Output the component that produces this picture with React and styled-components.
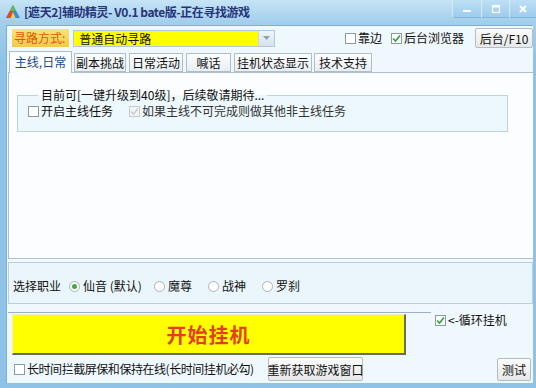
import React from "react";
import styled, { createGlobalStyle } from "styled-components";

const Global = createGlobalStyle`
  html, body { margin: 0; padding: 0; background: #ffffff; }
  body { font-family: "Noto Sans CJK SC", "Noto Sans", sans-serif; font-size: 12px; color: #111; }
  * { box-sizing: border-box; }
`;

const Window = styled.div`
  width: 536px;
  height: 388px;
  display: flex;
  flex-direction: column;
  padding: 0 3px 5px 6px;
  background: linear-gradient(#c6e4f7 0px, #a3cfec 22px, #8ec3e7 60px, #8ec3e7 100%);
  overflow: hidden;
`;

const TitleBar = styled.div`
  height: 25px;
  flex: none;
  display: flex;
  align-items: flex-start;
  margin-left: -3px;
`;

const TitleIcon = styled.svg`
  width: 16px;
  height: 16px;
  margin: 4px 3px 0 2px;
  flex: none;
`;

const TitleText = styled.div`
  margin-top: 4px;
  font-weight: bold;
  font-size: 12px;
  line-height: 16px;
  letter-spacing: -0.45px;
  color: #27357a;
  white-space: nowrap;
`;

const Controls = styled.div`
  margin-left: auto;
  display: flex;
  height: 18px;
  margin-right: -3px;
`;

const CtrlBtn = styled.div`
  width: ${p => p.$w}px;
  height: 18px;
  display: flex;
  align-items: center;
  justify-content: center;
  background: linear-gradient(#bfe0f5, #9ccced);
  border-left: 1px solid #d8ecf8;
  border-bottom: 1px solid #84b4d8;
  border-radius: ${p => p.$r || "0"};
`;

const Client = styled.div`
  flex: 1;
  min-height: 0;
  overflow: hidden;
  display: flex;
  flex-direction: column;
  background: #eff8fc;
  border-top: 1px solid #7eaed2;
  border-left: 1px solid #7eaed2;
  padding: 0 0 0 1px;
`;

const ToolRow = styled.div`
  flex: none;
  height: 20px;
  margin-top: 2px;
  display: flex;
  align-items: center;
`;

const PathLabel = styled.div`
  margin-left: 4px;
  width: 58px;
  height: 18px;
  line-height: 18px;
  padding-left: 2px;
  color: #e25a00;
  background: linear-gradient(#f9e27a, #f3c94a);
  white-space: nowrap;
`;

const Combo = styled.div`
  margin-left: 4px;
  width: 204px;
  height: 17px;
  display: flex;
  border: 1px solid #b6c8d6;
  background: #ffff00;
`;

const ComboText = styled.div`
  flex: 1;
  line-height: 15px;
  padding-left: 5px;
`;

const DropBtn = styled.div`
  width: 16px;
  display: flex;
  align-items: center;
  justify-content: center;
  background: linear-gradient(#eef5fa, #d5e3ee);
  border-left: 1px solid #c4d4e0;
`;

const CheckLabel = styled.label`
  display: flex;
  align-items: center;
  white-space: nowrap;
  line-height: 14px;
  margin-left: ${p => p.$ml || 0}px;
  margin-top: ${p => p.$mt || 0}px;
  width: ${p => (p.$w ? `${p.$w}px` : "auto")};
  letter-spacing: ${p => p.$ls || 0}px;
  color: ${p => (p.$disabled ? "#333" : "#111")};
`;

const Box = styled.span`
  width: 11px;
  height: 11px;
  margin-right: 2px;
  border: 1px solid ${p => (p.$disabled ? "#c4ccd2" : "#8a9aa8")};
  background: ${p => (p.$disabled ? "#f2f4f5" : "#ffffff")};
  display: flex;
  align-items: center;
  justify-content: center;
  flex: none;
`;

const Button = styled.div`
  width: ${p => p.$w}px;
  height: ${p => p.$h || 22}px;
  flex: none;
  display: flex;
  align-items: center;
  justify-content: center;
  white-space: nowrap;
  border: 1px solid #b4bcc4;
  border-radius: 2px;
  background: linear-gradient(#fbfbfb, #e6e8ea);
  color: #111;
  margin-left: ${p => p.$ml || 0}px;
`;

const TabsRow = styled.div`
  flex: none;
  margin-top: 3px;
  height: 21px;
  display: flex;
  align-items: flex-end;
  padding-left: 1px;
  position: relative;
  z-index: 1;
`;

const Tab = styled.div`
  width: ${p => p.$w}px;
  margin-right: ${p => p.$mr || 2}px;
  height: ${p => (p.$active ? 22 : 19)}px;
  margin-bottom: ${p => (p.$active ? -1 : 0)}px;
  line-height: ${p => (p.$active ? 19 : 17)}px;
  text-align: center;
  white-space: nowrap;
  color: ${p => (p.$active ? "#1a4a90" : "#111")};
  background: ${p => (p.$active ? "#fbfdfe" : "linear-gradient(#fdfefe, #e9eef2)")};
  border: 1px solid #aebfcc;
  border-bottom: ${p => (p.$active ? "none" : "1px solid #aebfcc")};
`;

const TabPanel = styled.div`
  flex: none;
  height: 187px;
  border: 1px solid #aebfcc;
  border-right: none;
  background: #fbfdfe;
  padding: 15px 0 0 8px;
`;

const Group = styled.fieldset`
  margin: 0;
  width: 491px;
  height: 44px;
  padding: 2px 0 0 10px;
  border: 1px solid #bcd3e0;
  background: #edf8fc;
`;

const Legend = styled.legend`
  margin-left: 10px;
  padding: 0 3px;
  line-height: 14px;
  color: #111;
`;

const GroupRow = styled.div`
  display: flex;
  align-items: center;
`;

const CareerPanel = styled.div`
  flex: none;
  margin-top: 3px;
  height: 42px;
  border: 1px solid #b9cfdd;
  background: #eaf6fb;
  display: flex;
  align-items: center;
  padding: 6px 0 0 4px;
`;

const CareerLabel = styled.div`
  line-height: 14px;
  margin-right: 8px;
`;

const RadioLabel = styled.label`
  display: flex;
  align-items: center;
  white-space: nowrap;
  line-height: 14px;
  width: ${p => p.$w}px;
`;

const Dot = styled.span`
  width: 11px;
  height: 11px;
  border-radius: 50%;
  border: 1px solid #a9b3bc;
  background: #ffffff;
  margin-right: 3px;
  display: flex;
  align-items: center;
  justify-content: center;
  &::after {
    content: "";
    width: 5px;
    height: 5px;
    border-radius: 50%;
    background: ${p => (p.$on ? "#3fae3f" : "transparent")};
  }
`;

const StartRow = styled.div`
  flex: none;
  margin-top: 8px;
  display: flex;
  align-items: flex-start;
`;

const StartFrame = styled.div`
  width: 423px;
  border-top: 1px solid #9fb0be;
  padding: 1px 0 0 4px;
`;

const StartButton = styled.div`
  width: 394px;
  height: 41px;
  background: #ffff00;
  border-top: 1px solid #f0f0c0;
  border-left: 1px solid #f0f0c0;
  border-right: 2px solid #6a6a5a;
  border-bottom: 2px solid #6a6a5a;
  display: flex;
  align-items: center;
  justify-content: center;
  font-size: 20px;
  font-weight: bold;
  letter-spacing: 1px;
  color: #e2401c;
`;

const BottomRow = styled.div`
  flex: none;
  margin-top: 1px;
  height: 26px;
  display: flex;
  align-items: center;
  padding-left: 6px;
`;

const Tick = ({ disabled }) => (
  <svg width="9" height="9" viewBox="0 0 9 9">
    <path d="M1 4.5 L3.5 7 L8 1.5" fill="none" stroke={disabled ? "#c8cfd4" : "#3a9a3a"} strokeWidth="1.6" />
  </svg>
);

const Check = ({ checked, disabled, children, ml, mt, w, ls }) => (
  <CheckLabel $ml={ml} $mt={mt} $w={w} $ls={ls} $disabled={disabled}>
    <Box $disabled={disabled}>{checked && <Tick disabled={disabled} />}</Box>
    {children}
  </CheckLabel>
);

const Radio = ({ on, w, children }) => (
  <RadioLabel $w={w}>
    <Dot $on={on} />
    {children}
  </RadioLabel>
);

export default function App() {
  return (
    <>
      <Global />
      <Window>
        <TitleBar>
          <TitleIcon viewBox="0 0 16 16">
            <path d="M8 1 L15 14 L1 14 Z" fill="#3a8ad8" />
            <path d="M8 1 L1 14 L8 14 Z" fill="#e0492a" />
            <path d="M8 1 L5 7 L11 7 Z" fill="#5cc14a" />
            <path d="M8 8 L5.5 14 L10.5 14 Z" fill="#f4d23a" />
          </TitleIcon>
          <TitleText>[遮天2]辅助精灵- V0.1 bate版-正在寻找游戏</TitleText>
          <Controls>
            <CtrlBtn $w={29} $r="0 0 0 4px">
              <svg width="10" height="10" viewBox="0 0 10 10">
                <rect x="1" y="6" width="8" height="2" fill="#ffffff" />
              </svg>
            </CtrlBtn>
            <CtrlBtn $w={28}>
              <svg width="10" height="10" viewBox="0 0 10 10">
                <rect x="1.5" y="1.5" width="7" height="7" fill="none" stroke="#ffffff" strokeWidth="1.2" />
                <rect x="1.5" y="1.5" width="7" height="2" fill="#ffffff" />
              </svg>
            </CtrlBtn>
            <CtrlBtn $w={27}>
              <svg width="10" height="10" viewBox="0 0 10 10">
                <path d="M2 2 L8 8 M8 2 L2 8" stroke="#ffffff" strokeWidth="2" />
              </svg>
            </CtrlBtn>
          </Controls>
        </TitleBar>
        <Client>
          <ToolRow>
            <PathLabel>寻路方式:</PathLabel>
            <Combo>
              <ComboText>普通自动寻路</ComboText>
              <DropBtn>
                <svg width="7" height="5" viewBox="0 0 7 5">
                  <path d="M0 0 L7 0 L3.5 4 Z" fill="#8aa2b6" />
                </svg>
              </DropBtn>
            </Combo>
            <Check ml={70}>靠边</Check>
            <Check ml={9} checked>后台浏览器</Check>
            <Button $w={58} $h={20} $ml={11}>后台/F10</Button>
          </ToolRow>
          <TabsRow>
            <Tab $w={63} $active>主线,日常</Tab>
            <Tab $w={52} $mr={3}>副本挑战</Tab>
            <Tab $w={54} $mr={3}>日常活动</Tab>
            <Tab $w={45} $mr={3}>喊话</Tab>
            <Tab $w={78} $mr={2}>挂机状态显示</Tab>
            <Tab $w={58}>技术支持</Tab>
          </TabsRow>
          <TabPanel>
            <Group>
              <Legend>目前可[一键升级到40级]，后续敬请期待...</Legend>
              <GroupRow>
                <Check>开启主线任务</Check>
                <Check ml={16} checked disabled>如果主线不可完成则做其他非主线任务</Check>
              </GroupRow>
            </Group>
          </TabPanel>
          <CareerPanel>
            <CareerLabel>选择职业</CareerLabel>
            <Radio on w={85}>仙音 (默认)</Radio>
            <Radio w={54}>魔尊</Radio>
            <Radio w={54}>战神</Radio>
            <Radio w={60}>罗刹</Radio>
          </CareerPanel>
          <StartRow>
            <StartFrame>
              <StartButton>开始挂机</StartButton>
            </StartFrame>
            <Check ml={4} mt={1} checked>&lt;-循环挂机</Check>
          </StartRow>
          <BottomRow>
            <Check w={246} ls={-0.45}>长时间拦截屏保和保持在线(长时间挂机必勾)</Check>
            <Button $w={95} $h={24} $ml={8}>重新获取游戏窗口</Button>
            <Button $w={34} $h={23} $ml={134}>测试</Button>
          </BottomRow>
        </Client>
      </Window>
    </>
  );
}
